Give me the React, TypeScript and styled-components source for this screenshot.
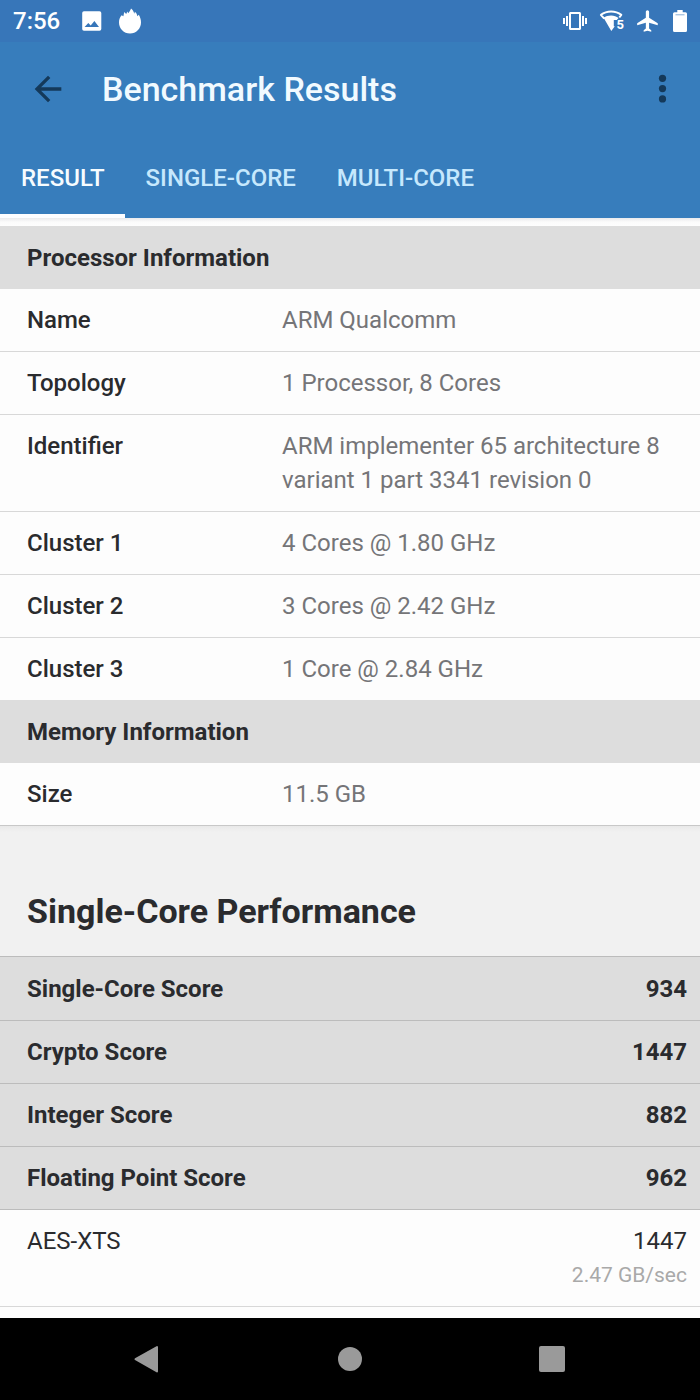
import React from "react";
import styled, { createGlobalStyle } from "styled-components";

const GlobalStyle = createGlobalStyle`
  *, *::before, *::after { box-sizing: border-box; }
  body {
    margin: 0;
    background: #f1f1f1;
    color: #2a2b2e;
    font-family: Roboto, "Liberation Sans", sans-serif;
    font-size: 24px;
    line-height: 34px;
  }
  button {
    border: 0;
    background: none;
    color: inherit;
    font: inherit;
    cursor: pointer;
  }
`;

const Screen = styled.div`
  display: flex;
  flex-direction: column;
  min-height: 100vh;
`;

const StatusBar = styled.div`
  display: flex;
  align-items: center;
  justify-content: space-between;
  height: 42px;
  padding: 0 13px;
  background: #3776b9;
  color: #fff;
`;

const StatusGroup = styled.div<{ $gap: number }>`
  display: flex;
  align-items: center;
  gap: ${(p) => p.$gap}px;
`;

const Clock = styled.time`
  margin-right: 6px;
  font-weight: 500;
`;

const AppBar = styled.header`
  background: #377dbc;
  color: #f1faff;
`;

const Toolbar = styled.div`
  display: flex;
  align-items: center;
  height: 94px;
  padding: 0 16px 0 28px;
`;

const IconButton = styled.button`
  display: flex;
  padding: 0;
  color: #14395a;
`;

const Title = styled.h1`
  flex: 1;
  margin: 0 0 0 34px;
  font-size: 34px;
  font-weight: 500;
`;

const Tabs = styled.div`
  display: flex;
  height: 82px;
`;

const Tab = styled.button<{ $active?: boolean }>`
  padding: 6px 20px 0 21px;
  border-bottom: 4px solid ${(p) => (p.$active ? "#fcfdff" : "transparent")};
  color: ${(p) => (p.$active ? "#f6fcff" : "#c6e8fd")};
  font-weight: 500;
`;

const Content = styled.main`
  flex: 1;
  background: #fdfdfd;
`;

const InfoCard = styled.section`
  padding-top: 8px;
  background: linear-gradient(#e9eaec, #fbfbfb 4px, #fdfdfd 8px);
`;

const DataTable = styled.table`
  width: 100%;
  border-collapse: separate;
  border-spacing: 0;
`;

const GroupHeading = styled.th`
  height: 63px;
  padding: 0 27px;
  background: #dddddd;
  font-weight: 700;
  text-align: left;
`;

const InfoRow = styled.tr`
  th, td {
    padding: 14px 0;
    border-bottom: 1px solid #d8d8d8;
    text-align: left;
    vertical-align: top;
  }
  th {
    width: 282px;
    padding-left: 27px;
    font-weight: 500;
  }
  td {
    padding-right: 27px;
    color: #757578;
  }
  &:last-child th, &:last-child td { border-bottom: 0; }
`;

const SectionHeader = styled.div`
  padding: 68px 27px 28px;
  border-top: 1px solid #c8c8c8;
  border-bottom: 1px solid #bcbcbc;
  background: linear-gradient(#e9e9e9, #f1f1f1 6px);
`;

const SectionTitle = styled.h2`
  margin: 0;
  font-size: 34px;
  font-weight: 700;
`;

const ScoreTable = styled(DataTable)`
  background: #dddddd;
`;

const ScoreRow = styled.tr<{ $plain?: boolean }>`
  th, td {
    padding: 14px 13px 14px 27px;
    border-bottom: 1px solid ${(p) => (p.$plain ? "#d8d8d8" : "#bcbcbc")};
    background: ${(p) => (p.$plain ? "#fdfdfd" : "#dddddd")};
    font-weight: ${(p) => (p.$plain ? 400 : 700)};
    text-align: left;
    vertical-align: top;
  }
  &:first-child th, &:first-child td { padding-top: 15px; }
  td { text-align: right; }
`;

const Rate = styled.div`
  color: #a9a9a9;
  font-size: 21px;
`;

const NavBar = styled.nav`
  display: flex;
  align-items: center;
  justify-content: center;
  gap: 174px;
  height: 82px;
  background: #000;
`;

const NavButton = styled.button`
  display: flex;
  padding: 0;
  color: #9a9a9a;
`;

type IconProps = { width: number; height: number; box: string; children: React.ReactNode };
const Icon = ({ width, height, box, children }: IconProps) => (
  <svg width={width} height={height} viewBox={box} fill="currentColor" overflow="visible" aria-hidden="true">
    {children}
  </svg>
);

const PictureIcon = () => (
  <Icon width={20} height={20} box="0 0 20 20">
    <path fillRule="evenodd" d="M2 .3h15.500Q19.300.3 19.300 2v16q0 1.700-1.800 1.700H2Q.2 19.700.2 18V2Q.2.3 2 .3zM2.600 16h14.400l-4.600-5.900-3.700 4.300-2.400-2.400z" />
  </Icon>
);

const FlameIcon = () => (
  <Icon width={24} height={26} box="0 0 24 26">
    <path d="M13 .4C12.600 2.400 11.200 3.600 10.200 5.200L9.400 3.600 8.200 5.900 6.200 4 5.400 8.200 3.600 7.300C1.900 9.300 1 11.500 1 14.400 1 20.500 5.900 25.400 12 25.400s11-4.900 11-11c0-2.800-.8-5.100-2.200-7.600L19.300 8.300C19.200 6.600 18.400 5 16.900 3.800L16.300 5.700C15.800 3.400 14.700 1.700 13 .4z" />
  </Icon>
);

const VibrateIcon = () => (
  <Icon width={24} height={24} box="0 0 24 24">
    <path d="M0 15h2V9H0v6zm3 2h2V7H3v10zm19-8v6h2V9h-2zm-3 8h2V7h-2v10zM16.500 3h-9C6.670 3 6 3.670 6 4.500v15c0 .83.67 1.500 1.500 1.500h9c.83 0 1.500-.67 1.500-1.500v-15c0-.83-.67-1.500-1.500-1.500zM16 19H8V5h8v14z" />
  </Icon>
);

const WifiBars = styled.span`
  position: relative;
  display: flex;
`;

const WifiBand = styled.span`
  position: absolute;
  right: -1px;
  bottom: 1px;
  font-size: 13px;
  font-weight: 700;
  line-height: 13px;
`;

const WifiIcon = () => (
  <WifiBars>
    <Icon width={24} height={22} box="0 0 24 22">
      <path fill="none" stroke="currentColor" strokeWidth="2" strokeLinejoin="round" d="M5.200 8.600L1.900 4.900C4.900 2.600 8.300 1.500 12.100 1.500s7.200 1.100 10.200 3.400L20.300 7.500" />
      <path d="M4.600 7.800C6.700 6.300 9.200 5.600 12.100 5.600s5.400.9 7.400 2.500L17.800 10h-3v6.200h1L12.300 21z" />
    </Icon>
    <WifiBand>5</WifiBand>
  </WifiBars>
);

const PlaneIcon = () => (
  <Icon width={26} height={26} box="0 0 24 24">
    <path d="M21 16v-2l-8-5V3.500c0-.83-.67-1.500-1.500-1.500S10 2.670 10 3.500V9l-8 5v2l8-2.500V19l-2 1.500V22l3.500-1 3.500 1v-1.500L13 19v-5.500l8 2.500z" />
  </Icon>
);

const BatteryIcon = () => (
  <Icon width={14} height={22} box="0 0 14 22">
    <path d="M4.300 0h5.400v2.200h2.800q1.500 0 1.500 1.500v16.800q0 1.500-1.500 1.500h-11Q0 22 0 20.500V3.700q0-1.500 1.500-1.500h2.800z" />
    <path d="M2.500 4.800h9" fill="none" stroke="#3776b9" strokeWidth=".6" />
  </Icon>
);

const processorRows = [
  ["Name", "ARM Qualcomm"],
  ["Topology", "1 Processor, 8 Cores"],
  ["Identifier", "ARM implementer 65 architecture 8 variant 1 part 3341 revision 0"],
  ["Cluster 1", "4 Cores @ 1.80 GHz"],
  ["Cluster 2", "3 Cores @ 2.42 GHz"],
  ["Cluster 3", "1 Core @ 2.84 GHz"],
];
const memoryRows = [["Size", "11.5 GB"]];
const scoreRows = [
  ["Single-Core Score", "934"],
  ["Crypto Score", "1447"],
  ["Integer Score", "882"],
  ["Floating Point Score", "962"],
];

const InfoGroup = ({ heading, rows }: { heading: string; rows: string[][] }) => (
  <tbody>
    <tr>
      <GroupHeading colSpan={2} scope="colgroup">{heading}</GroupHeading>
    </tr>
    {rows.map(([label, value]) => (
      <InfoRow key={label}>
        <th scope="row">{label}</th>
        <td>{value}</td>
      </InfoRow>
    ))}
  </tbody>
);

export default function App() {
  return (
    <Screen>
      <GlobalStyle />
      <StatusBar>
        <StatusGroup $gap={16}>
          <Clock>7:56</Clock>
          <PictureIcon />
          <FlameIcon />
        </StatusGroup>
        <StatusGroup $gap={12}>
          <VibrateIcon />
          <WifiIcon />
          <PlaneIcon />
          <BatteryIcon />
        </StatusGroup>
      </StatusBar>
      <AppBar>
        <Toolbar>
          <IconButton aria-label="Back">
            <Icon width={40} height={40} box="0 0 24 24">
              <path d="M20 11H7.830l5.590-5.590L12 4l-8 8 8 8 1.410-1.410L7.830 13H20v-2z" />
            </Icon>
          </IconButton>
          <Title>Benchmark Results</Title>
          <IconButton aria-label="More options">
            <Icon width={42} height={42} box="0 0 42 42">
              <circle cx="20.500" cy="10.300" r="3.600" />
              <circle cx="20.500" cy="20.600" r="3.600" />
              <circle cx="20.500" cy="30.900" r="3.600" />
            </Icon>
          </IconButton>
        </Toolbar>
        <Tabs role="tablist">
          <Tab role="tab" aria-selected="true" $active>RESULT</Tab>
          <Tab role="tab" aria-selected="false">SINGLE-CORE</Tab>
          <Tab role="tab" aria-selected="false">MULTI-CORE</Tab>
        </Tabs>
      </AppBar>
      <Content>
        <InfoCard>
          <DataTable>
            <InfoGroup heading="Processor Information" rows={processorRows} />
            <InfoGroup heading="Memory Information" rows={memoryRows} />
          </DataTable>
        </InfoCard>
        <section>
          <SectionHeader>
            <SectionTitle>Single-Core Performance</SectionTitle>
          </SectionHeader>
          <ScoreTable>
            <tbody>
              {scoreRows.map(([label, score]) => (
                <ScoreRow key={label}>
                  <th scope="row">{label}</th>
                  <td>{score}</td>
                </ScoreRow>
              ))}
              <ScoreRow $plain>
                <th scope="row">AES-XTS</th>
                <td>
                  1447
                  <Rate>2.47 GB/sec</Rate>
                </td>
              </ScoreRow>
            </tbody>
          </ScoreTable>
        </section>
      </Content>
      <NavBar aria-label="System navigation">
        <NavButton aria-label="Back">
          <Icon width={28} height={28} box="0 0 28 28">
            <path d="M23 2v24.500L1.500 14.200z" stroke="currentColor" strokeWidth="2" strokeLinejoin="round" />
          </Icon>
        </NavButton>
        <NavButton aria-label="Home">
          <Icon width={28} height={28} box="0 0 28 28">
            <circle cx="14" cy="14" r="12" />
          </Icon>
        </NavButton>
        <NavButton aria-label="Recent apps">
          <Icon width={28} height={28} box="0 0 28 28">
            <rect x="1" y="1" width="26" height="26" rx="2" />
          </Icon>
        </NavButton>
      </NavBar>
    </Screen>
  );
}
